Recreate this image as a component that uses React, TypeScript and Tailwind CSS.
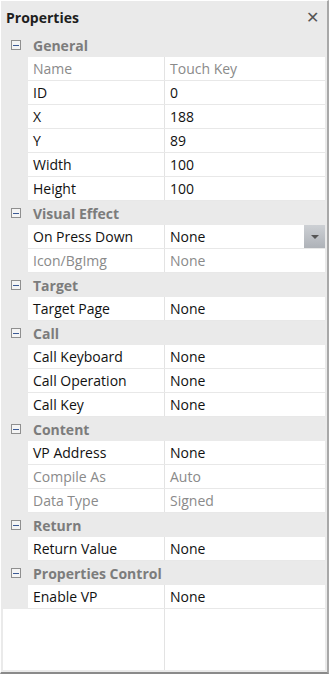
import React from "react";

type Row = { name: string; value: string; disabled?: boolean; dropdown?: boolean };
type Group = { title: string; rows: Row[] };

const groups: Group[] = [
  {
    title: "General",
    rows: [
      { name: "Name", value: "Touch Key", disabled: true },
      { name: "ID", value: "0" },
      { name: "X", value: "188" },
      { name: "Y", value: "89" },
      { name: "Width", value: "100" },
      { name: "Height", value: "100" },
    ],
  },
  {
    title: "Visual Effect",
    rows: [
      { name: "On Press Down", value: "None", dropdown: true },
      { name: "Icon/BgImg", value: "None", disabled: true },
    ],
  },
  { title: "Target", rows: [{ name: "Target Page", value: "None" }] },
  {
    title: "Call",
    rows: [
      { name: "Call Keyboard", value: "None" },
      { name: "Call Operation", value: "None" },
      { name: "Call Key", value: "None" },
    ],
  },
  {
    title: "Content",
    rows: [
      { name: "VP Address", value: "None" },
      { name: "Compile As", value: "Auto", disabled: true },
      { name: "Data Type", value: "Signed", disabled: true },
    ],
  },
  { title: "Return", rows: [{ name: "Return Value", value: "None" }] },
  { title: "Properties Control", rows: [{ name: "Enable VP", value: "None" }] },
];

function Collapse() {
  return (
    <div className="w-[26px] flex justify-center pl-[3px]">
      <div className="w-[10px] h-[10px] border border-[#8f8f8f] bg-[#f4f4f4] flex items-center justify-center">
        <div className="w-[6px] h-px bg-[#3b5a95]" />
      </div>
    </div>
  );
}

function PropRow({ row }: { row: Row }) {
  const color = row.disabled ? "text-[#8a8a8a]" : "text-[#111]";
  return (
    <div className="flex h-[24px] ml-[27px] bg-white border-b border-[#e8e8e8]">
      <div className={`w-[137px] border-r border-[#e3e3e3] pl-[5px] flex items-center ${color}`}>
        {row.name}
      </div>
      <div className={`flex-1 pl-[5px] flex items-center justify-between ${color}`}>
        <span>{row.value}</span>
        {row.dropdown && (
          <div className="w-[21px] h-[23px] bg-gradient-to-b from-[#cdd0d4] to-[#aeb2b8] flex items-center justify-center">
            <div className="w-0 h-0 border-l-[4px] border-r-[4px] border-t-[4px] border-l-transparent border-r-transparent border-t-[#555]" />
          </div>
        )}
      </div>
    </div>
  );
}

export default function App() {
  return (
    <div
      className="w-[329px] h-[674px] bg-[#eaeaea] flex flex-col text-[14px] border-l border-t border-white border-r-2 border-r-[#a8a8a8] border-b-2 border-b-[#8a8a8a]"
      style={{ fontFamily: '"Open Sans", "Noto Sans", sans-serif' }}
    >
      <div className="h-[32px] flex items-center justify-between pl-[5px] pr-[8px]">
        <span className="font-bold text-[#1e1e1e] text-[14px]">Properties</span>
        <span className="text-[#555] text-[16px] leading-none">✕</span>
      </div>
      <div className="flex flex-col pr-[2px]">
        {groups.map((g) => (
          <div key={g.title}>
            <div className="h-[24px] flex items-center">
              <Collapse />
              <span className="pl-[6px] font-bold text-[#7c7c7c]">{g.title}</span>
            </div>
            {g.rows.map((r) => (
              <PropRow key={r.name} row={r} />
            ))}
          </div>
        ))}
      </div>
      <div className="flex-1 flex bg-white ml-[2px] mr-[2px] mb-[2px]">
        <div className="w-[162px] border-r border-[#e3e3e3]" />
        <div className="flex-1" />
      </div>
    </div>
  );
}
